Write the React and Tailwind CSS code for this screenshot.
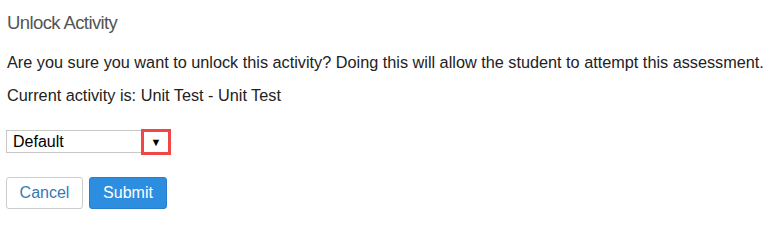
export default function App() {
  return (
    <div className="w-[769px] h-[216px] bg-white pl-[7px] pt-[12px] text-[#333] font-['Liberation_Sans',Arial,sans-serif]">
      <h4 className="text-[18.5px] leading-[22px] tracking-[-0.6px] text-[#555] m-0">Unlock Activity</h4>
      <p className="text-[16.25px] leading-[20px] mt-[18px] text-[#222]">
        Are you sure you want to unlock this activity? Doing this will allow the student to attempt this assessment.
      </p>
      <p className="text-[16.25px] leading-[20px] mt-[13px] text-[#222]">Current activity is: Unit Test - Unit Test</p>
      <div className="mt-[25px] ml-[-1px] flex">
        <div className="relative w-[165px] h-[23px] border border-[#c8c8c8] flex items-center pl-[6px] text-[16px] text-black">
          Default
          <div className="absolute right-[-1px] top-[-2px] w-[30px] h-[26px] border-[3px] border-[#f04646] flex items-center justify-center">
            <span className="text-[11px] leading-none text-black">▼</span>
          </div>
        </div>
      </div>
      <div className="mt-[24px] ml-[-1px] flex gap-[6px]">
        <button className="w-[77px] h-[32px] border border-[#ccc] rounded-[3px] bg-white text-[#337ab7] text-[16px]">Cancel</button>
        <button className="w-[78px] h-[32px] border border-[#2a7ccc] rounded-[3px] bg-[#2d8ee0] text-white text-[16px]">Submit</button>
      </div>
    </div>
  );
}
